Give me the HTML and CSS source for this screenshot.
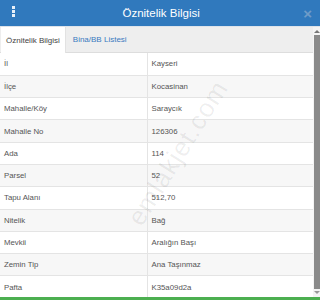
FILE: index.html
```html
<!DOCTYPE html>
<html>
<head>
<meta charset="utf-8">
<link rel="stylesheet" href="styles.css">
</head>
<body>
<div class="modal">
  <div class="header">
    <span class="grip"><i></i><i></i><i></i></span>
    <span class="title">Öznitelik Bilgisi</span>
    <span class="close">×</span>
  </div>
  <div class="body">
    <div class="content">
      <div class="tabs">
        <div class="tab active">Öznitelik Bilgisi</div>
        <div class="tab">Bina/BB Listesi</div>
      </div>
      <table class="grid">
        <tr><td>İl</td><td>Kayseri</td></tr>
        <tr><td>İlçe</td><td>Kocasinan</td></tr>
        <tr><td>Mahalle/Köy</td><td>Saraycık</td></tr>
        <tr><td>Mahalle No</td><td>126306</td></tr>
        <tr><td>Ada</td><td>114</td></tr>
        <tr><td>Parsel</td><td>52</td></tr>
        <tr><td>Tapu Alanı</td><td>512,70</td></tr>
        <tr><td>Nitelik</td><td>Bağ</td></tr>
        <tr><td>Mevkii</td><td>Aralığın Başı</td></tr>
        <tr><td>Zemin Tip</td><td>Ana Taşınmaz</td></tr>
        <tr><td>Pafta</td><td>K35a09d2a</td></tr>
      </table>
      <div class="watermark">emlakjet.com</div>
    </div>
    <div class="scrollbar">
      <div class="arrow up"></div>
      <div class="thumb"></div>
      <div class="arrow down"></div>
    </div>
  </div>
  <div class="footer"></div>
</div>
</body>
</html>
```
FILE: styles.css
```css
* { box-sizing: border-box; }
html, body { margin: 0; padding: 0; }
body {
  width: 320px;
  height: 300px;
  overflow: hidden;
  background: #fff;
  font-family: "Liberation Sans", Arial, sans-serif;
  color: #333;
}
.modal {
  display: flex;
  flex-direction: column;
  height: 300px;
}
.header {
  height: 26px;
  background: #3079bd;
  display: flex;
  align-items: center;
  flex: none;
}
.grip {
  display: flex;
  flex-direction: column;
  gap: 1px;
  margin-left: 12px;
  margin-top: -4px;
}
.grip i {
  display: block;
  width: 3px;
  height: 3px;
  background: #e8f0f8;
}
.title {
  flex: 1;
  text-align: center;
  color: #fff;
  font-size: 11.5px;
  padding-left: 4px;
}
.close {
  color: #6f9cc8;
  font-size: 15px;
  font-weight: bold;
  margin-right: 8px;
  line-height: 1;
}
.body {
  flex: 1;
  display: flex;
  min-height: 0;
  border-top: 1px solid #dde3ea;
}
.content {
  flex: 1;
  position: relative;
  overflow: hidden;
}
.tabs {
  display: flex;
  height: 26px;
  background: #eeeeee;
  border-bottom: 1px solid #dddddd;
  padding-left: 1px;
}
.tab {
  font-size: 8px;
  padding: 0 7px;
  display: flex;
  align-items: center;
  color: #3a7abf;
}
.tab.active {
  background: #fff;
  color: #444;
  border-right: 1px solid #e2e2e2;
  margin-bottom: -1px;
  padding: 0 5px 0 5px;
}
.grid {
  width: 100%;
  border-collapse: collapse;
  font-size: 7.8px;
  color: #555;
}
.grid td {
  height: 22.3px;
  padding: 0 0 0 4px;
  border-top: 1px solid #e4e4e4;
}
.grid tr:first-child td { border-top: none; }
.grid td:first-child {
  width: 147px;
  border-right: 1px solid #e4e4e4;
}
.grid tr:nth-child(even) td { background: #f7f7f7; }
.watermark {
  position: absolute;
  left: 178px;
  top: 126px;
  font-size: 26px;
  color: rgba(0, 0, 0, 0.07);
  transform: translate(-50%, -50%) rotate(-58deg);
  letter-spacing: 1px;
  white-space: nowrap;
  pointer-events: none;
}
.scrollbar {
  width: 7px;
  flex: none;
  display: flex;
  flex-direction: column;
  align-items: center;
  background: #f4f4f4;
}
.thumb {
  flex: 1;
  width: 6px;
  background: #8a8a8a;
  margin: 2px 0;
}
.arrow {
  width: 0;
  height: 0;
  border-left: 3px solid transparent;
  border-right: 3px solid transparent;
  margin-top: 3px;
}
.arrow.up { border-bottom: 3px solid #777; }
.arrow.down { border-top: 3px solid #999; margin: 0 0 3px; }
.footer {
  height: 3px;
  background: #4caf50;
  flex: none;
}
```
